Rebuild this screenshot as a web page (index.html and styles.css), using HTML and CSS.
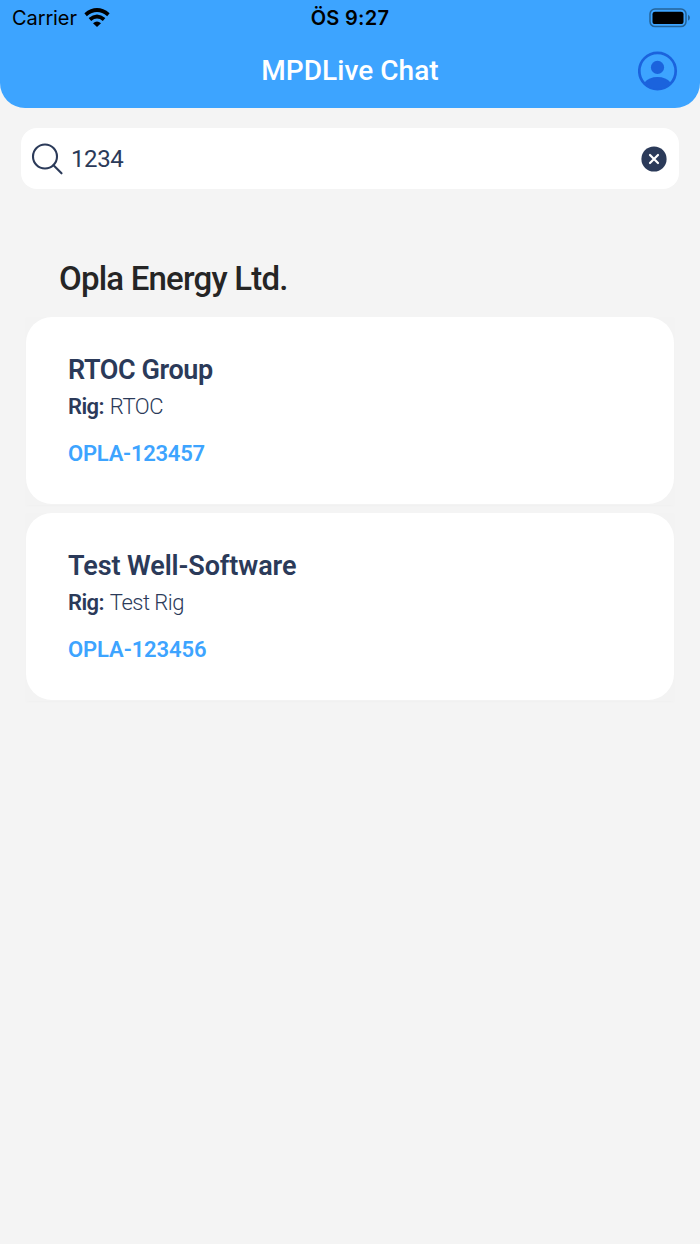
FILE: index.html
```html
<!DOCTYPE html>
<html lang="en">
<head>
<meta charset="utf-8">
<title>MPDLive Chat</title>
<link rel="stylesheet" href="styles.css">
</head>
<body>
<header class="header">
  <div class="status">
    <div class="carrier"><span>Carrier</span>
      <svg class="wifi" viewBox="0 0 26 19" width="26" height="19"><g fill="none" stroke="#000" stroke-width="3.900"><path d="M1.600 6.700Q13 -2.500 24.400 6.700"/><path d="M5.900 11.600Q13 5.600 20.100 11.600"/></g><path d="M9 15.200Q13 11.800 17 15.200L13 19Z"/></svg>
    </div>
    <div class="time">ÖS 9:27</div>
    <svg class="battery" viewBox="0 0 42 20" width="42" height="20"><rect x="1" y="1" width="36" height="17.600" rx="5" fill="none" stroke="#246399" stroke-width="1.500"/><rect x="3.500" y="3.700" width="31" height="12.400" rx="2.600"/><path d="M39 6.800Q41 7.700 41 9.800T39 12.800Z" fill="#246399"/></svg>
  </div>
  <div class="bar">
    <h1 class="title">MPDLive Chat</h1>
    <svg class="avatar" viewBox="0 0 40 40" width="40" height="40"><circle cx="19.500" cy="20" r="18.200" fill="none" stroke="#1b63dd" stroke-width="2.700"/><circle cx="19.500" cy="16.400" r="6.600" fill="#1b63dd"/><path d="M6.500 31.500Q11 26 19.500 26T32.500 31.500Q27 38 19.500 38T6.500 31.500Z" fill="#1b63dd"/></svg>
  </div>
</header>
<main>
  <div class="search">
    <svg class="glass" viewBox="0 0 32 32" width="32" height="32"><g fill="none" stroke="#2b3a59" stroke-width="2.100" stroke-linecap="round"><circle cx="14" cy="13.500" r="12"/><path d="M22.500 22.300L30.500 30.300"/></g></svg>
    <span class="query">1234</span>
    <svg class="clear" viewBox="0 0 26 26" width="26" height="26"><circle cx="13" cy="13" r="12.600" fill="#2b3a59"/><path d="M9 9L17 17M17 9L9 17" stroke="#fff" stroke-width="2.200" stroke-linecap="round"/></svg>
  </div>
  <h2 class="company">Opla Energy Ltd.</h2>
  <section class="list">
    <div class="wrap"><article class="card">
      <h3 class="name">RTOC Group</h3>
      <p class="rig"><b class="label">Rig:</b><span class="value">RTOC</span></p>
      <p class="code">OPLA-123457</p>
    </article></div>
    <div class="wrap"><article class="card">
      <h3 class="name name-long">Test Well-Software</h3>
      <p class="rig"><b class="label">Rig:</b><span class="value">Test Rig</span></p>
      <p class="code code-wide">OPLA-123456</p>
    </article></div>
  </section>
</main>
</body>
</html>
```
FILE: styles.css
```css
* { box-sizing: border-box; }
body { margin: 0; min-height: 1244px; background: #f4f4f4; color: #2b3a59; font-family: Roboto, sans-serif; white-space: nowrap; }
h1, h2, h3, p { margin: 0; }
svg { display: block; flex: none; }
.header { height: 108px; background: #3da4ff; border-radius: 0 0 25px 25px; }
.status { display: grid; grid-template-columns: 1fr auto 1fr; height: 36px; padding: 0 9px 0 12px; align-items: center; color: #000; font-family: Inter, sans-serif; font-size: 20px; line-height: 36px; }
.carrier { display: flex; align-items: center; gap: 7px; letter-spacing: -.1px; }
.wifi { margin-top: -2px; }
.time { margin-right: 3px; font-weight: 600; letter-spacing: .3px; }
.battery { justify-self: end; margin-top: -1px; }
.bar { display: grid; grid-template-columns: 1fr auto 1fr; align-items: center; height: 70px; padding: 0 22px; }
.title { grid-column: 2; color: #fff; font-size: 28px; line-height: 36px; font-weight: 500; letter-spacing: .05px; }
.avatar { justify-self: end; }
.search { display: flex; align-items: center; height: 61px; margin: 20px 21px 0; padding: 0 12px 0 10px; border-radius: 16px; background: #fff; }
.query { margin-left: 8px; font-size: 24px; line-height: 30px; letter-spacing: -.4px; }
.clear { margin-left: auto; }
.company { margin: 70px 0 0 59px; color: #252525; font-size: 33px; line-height: 40px; font-weight: 500; letter-spacing: -.8px; }
.list { display: flex; flex-direction: column; gap: 8px; margin: 18px 26px 0; }
.wrap { height: 188px; background: #f3f3f3; box-shadow: 0 1px 3px rgba(0,0,0,.018); }
.card { height: 187px; padding: 34px 42px 0; border-radius: 26px; background: #fff; }
.name { font-size: 27px; line-height: 38px; font-weight: 600; letter-spacing: -.4px; }
.name-long { letter-spacing: -.1px; }
.rig { display: flex; gap: 6px; font-size: 22px; line-height: 36px; }
.label { font-weight: 600; letter-spacing: -.6px; }
.value { font-weight: 300; letter-spacing: -.5px; }
.code { margin-top: 11px; color: #3da4ff; font-size: 22px; line-height: 36px; font-weight: 600; letter-spacing: -.25px; }
.code-wide { letter-spacing: -.1px; }
```
